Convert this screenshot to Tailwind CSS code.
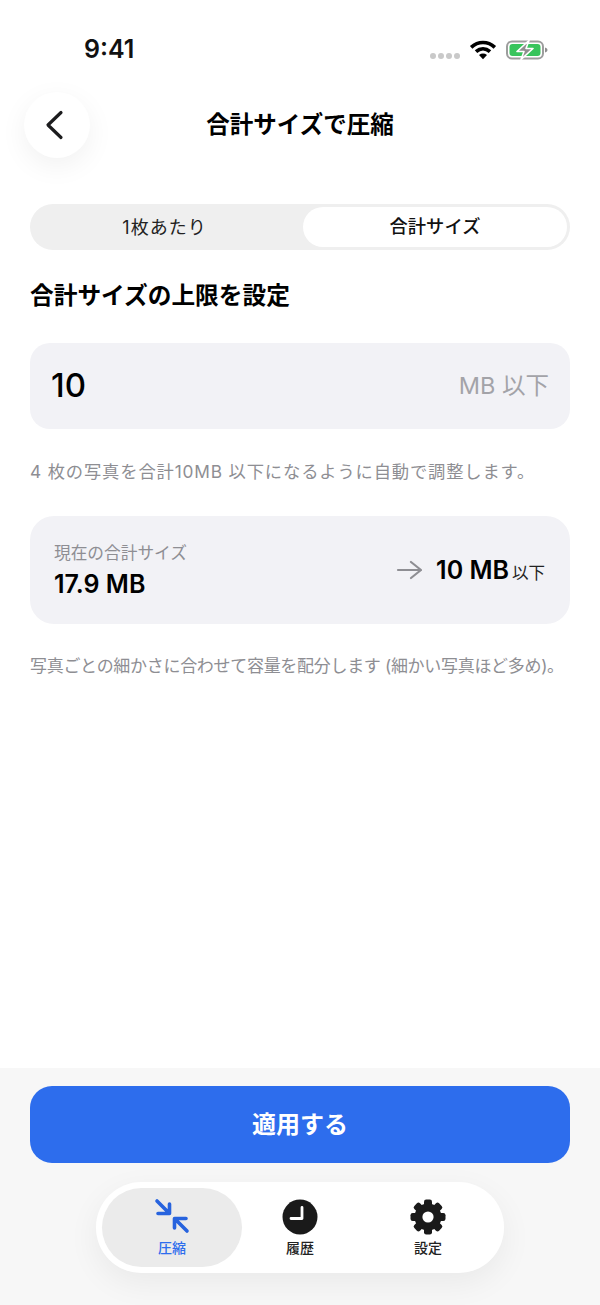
<!DOCTYPE html>
<html lang="ja">
<head>
<meta charset="utf-8">
<script src="https://cdn.jsdelivr.net/npm/@tailwindcss/browser@4"></script>
</head>
<body class="m-0 bg-white">
<div class="w-[600px] h-[1305px] flex flex-col overflow-hidden bg-white text-black font-['Inter','Noto_Sans_CJK_JP',sans-serif]">
  <!-- status bar -->
  <div class="h-[92px] shrink-0 flex items-start justify-between pl-[84px] pr-[52px] pt-[34px]">
    <span class="text-[25px] leading-[30px] font-semibold text-[#111]">9:41</span>
    <div class="flex items-center pt-[5px]">
      <div class="flex gap-[2px] mt-[12px] mr-[9px]">
        <span class="w-[6px] h-[6px] rounded-full bg-[#c9c9c9]"></span>
        <span class="w-[6px] h-[6px] rounded-full bg-[#c9c9c9]"></span>
        <span class="w-[6px] h-[6px] rounded-full bg-[#c9c9c9]"></span>
        <span class="w-[6px] h-[6px] rounded-full bg-[#c9c9c9]"></span>
      </div>
      <svg class="mr-[9px]" width="28" height="22" viewBox="0 0 26 20" fill="none" stroke="#000" stroke-width="3.4" stroke-linecap="butt">
        <path d="M2 7.5C8.5 1.5 17.5 1.5 24 7.5"/>
        <path d="M6.5 11.5C10.5 8 15.5 8 19.5 11.5"/>
        <path d="M13 18.5L9.3 14.6C11.5 12.9 14.5 12.9 16.7 14.6Z" fill="#000" stroke="none"/>
      </svg>
      <svg width="42" height="20" viewBox="0 0 42 20" fill="none">
        <rect x="1" y="1.5" width="36" height="17" rx="5" fill="#fff" stroke="#9d9d9d" stroke-width="2"/>
        <rect x="3.5" y="4" width="31" height="12" rx="3" fill="#38c45c"/>
        <path d="M39 7.5c1.6.4 2.5 1.3 2.5 2.5s-.9 2.1-2.5 2.5z" fill="#8e8e8e"/>
        <path d="M23 0.5L11 11.5H18L15 19.5L27 8.5H20Z" fill="#8f8f8f" stroke="#fff" stroke-width="1.6" stroke-linejoin="round"/>
      </svg>
    </div>
  </div>

  <!-- header -->
  <div class="relative h-[66px] shrink-0 flex items-center justify-center">
    <button class="absolute left-[24px] top-0 w-[66px] h-[66px] rounded-full bg-white shadow-[0_8px_28px_rgba(0,0,0,0.06)] flex items-center justify-center">
      <svg width="24" height="32" viewBox="0 0 24 32" fill="none" stroke="#1c1c1e" stroke-width="3.2" stroke-linecap="round" stroke-linejoin="round">
        <path d="M18 3.5L5 16L18 28.5" transform="translate(-2 0)"/>
      </svg>
    </button>
    <h1 class="text-[23.5px] leading-[32px] font-semibold text-black">合計サイズで圧縮</h1>
  </div>

  <!-- content -->
  <div class="flex-1 px-[30px] pt-[46px]">
    <div class="h-[46px] rounded-full bg-[#efefef] p-[3px] flex">
      <div class="w-[270px] pr-[7px] flex items-center justify-center text-[18px] tracking-[1px] text-[#222]">1枚あたり</div>
      <div class="flex-1 rounded-full bg-white flex items-center justify-center text-[18.3px] font-medium text-[#111]">合計サイズ</div>
    </div>
    <h2 class="mt-[29px] text-[23.7px] leading-[34px] font-semibold text-black">合計サイズの上限を設定</h2>
    <div class="mt-[30px] h-[86px] rounded-[20px] bg-[#f2f2f6] flex items-center justify-between px-[21px]">
      <span class="text-[33px] font-medium text-black">10</span>
      <span class="text-[23.5px] text-[#a3a3a8]">MB 以下</span>
    </div>
    <p class="mt-[30px] mb-[-1px] text-[17.3px] leading-[26px] tracking-[0.85px] text-[#8e8e93] whitespace-nowrap">4 枚の写真を合計10MB 以下になるように自動で調整します。</p>
    <div class="mt-[32px] h-[108px] rounded-[24px] bg-[#f2f2f6] flex items-center justify-between pl-[24px] pr-[25px]">
      <div class="flex flex-col">
        <span class="mb-[3px] text-[16.7px] leading-[24px] text-[#8e8e93]">現在の合計サイズ</span>
        <span class="text-[25px] leading-[32px] font-semibold text-black">17.9 MB</span>
      </div>
      <div class="flex items-center gap-[14px]">
        <svg width="26" height="22" viewBox="0 0 26 22" fill="none" stroke="#8e8e93" stroke-width="2.2" stroke-linecap="round" stroke-linejoin="round">
          <path d="M2 11H25M15 3L25 11L15 19"/>
        </svg>
        <div class="flex items-baseline gap-[3px]">
          <span class="text-[25px] leading-[32px] font-semibold text-black">10 MB</span>
          <span class="text-[16.5px] text-[#222]">以下</span>
        </div>
      </div>
    </div>
    <p class="mt-[29px] text-[17px] leading-[26px] tracking-[-0.3px] text-[#8e8e93] whitespace-nowrap">写真ごとの細かさに合わせて容量を配分します (細かい写真ほど多め)。</p>
  </div>

  <!-- bottom -->
  <div class="h-[237px] shrink-0 bg-[#f7f7f7] px-[30px] pt-[18px] flex flex-col items-center">
    <button class="w-full h-[77px] rounded-[22px] bg-[#2d6ded] text-white text-[24px] font-semibold flex items-center justify-center">適用する</button>
    <nav class="mt-[19px] w-[408px] h-[91px] rounded-full bg-white/95 shadow-[0_10px_32px_rgba(0,0,0,0.06)] p-[6px] flex">
      <div class="w-[140px] rounded-full bg-[#ebebeb] flex flex-col items-center text-[#2d6ded]">
        <svg class="mt-[10px]" width="36" height="36" viewBox="0 0 36 36" fill="none" stroke="#2763de" stroke-width="3.6" stroke-linecap="round" stroke-linejoin="round">
          <path d="M3 3L15 15M4 15.5H15.5V6"/>
          <path d="M33 33L21 21M32 20.5H20.5V30"/>
        </svg>
        <span class="mt-[4px] text-[14px] leading-[20px] font-medium">圧縮</span>
      </div>
      <div class="w-[116px] flex flex-col items-center text-[#222]">
        <svg class="mt-[11px]" width="36" height="36" viewBox="0 0 36 36">
          <circle cx="18" cy="18" r="17.5" fill="#1a1a1a"/>
          <path d="M20 8.5V19.5H9" fill="none" stroke="#fff" stroke-width="2.8" stroke-linecap="round" stroke-linejoin="round"/>
        </svg>
        <span class="mt-[3px] text-[14px] leading-[20px] font-medium">履歴</span>
      </div>
      <div class="w-[140px] flex flex-col items-center text-[#222]">
        <svg class="mt-[11px]" width="36" height="36" viewBox="0 0 36 36">
          <g fill="#1a1a1a">
            <circle cx="18" cy="18" r="13.5"/>
            <rect x="14" y="0.5" width="8" height="35" rx="2.2"/>
            <rect x="14" y="0.5" width="8" height="35" rx="2.2" transform="rotate(45 18 18)"/>
            <rect x="14" y="0.5" width="8" height="35" rx="2.2" transform="rotate(90 18 18)"/>
            <rect x="14" y="0.5" width="8" height="35" rx="2.2" transform="rotate(135 18 18)"/>
          </g>
          <circle cx="18" cy="18" r="5.6" fill="#fff"/>
        </svg>
        <span class="mt-[3px] text-[14px] leading-[20px] font-medium">設定</span>
      </div>
    </nav>
  </div>
</div>
</body>
</html>
